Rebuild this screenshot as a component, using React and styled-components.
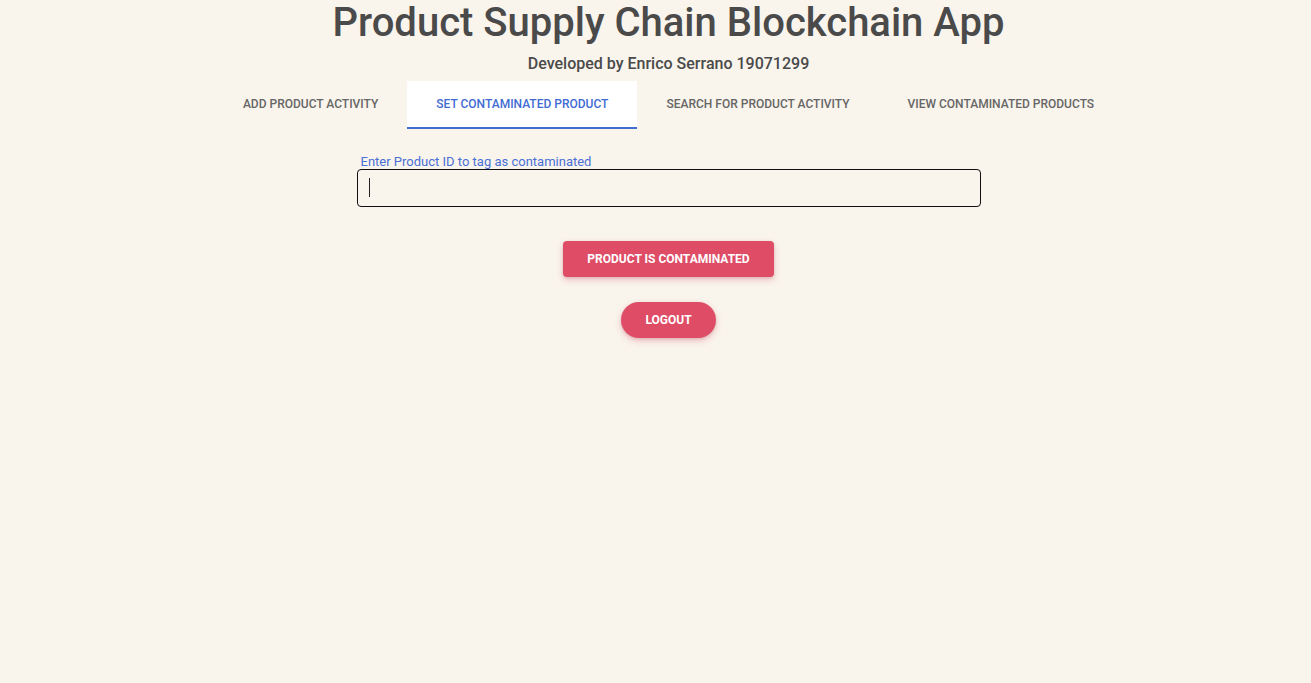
import { useState } from "react";
import styled, { createGlobalStyle } from "styled-components";

const GlobalStyle = createGlobalStyle`
  html, body { margin: 0; padding: 0; background: #f9f4ec; }
  body { font-family: Roboto, "Liberation Sans", sans-serif; min-height: 683px; }
`;

const Page = styled.div`
  display: flex; flex-direction: column; align-items: center;
  padding-left: 26px;
`;
const Title = styled.h1`
  margin: 0; font-size: 40px; font-weight: 500;
  color: #4a4a4a; line-height: 46px;
`;
const Subtitle = styled.h3`
  margin: 7px 0 0; font-size: 16px; font-weight: 500; color: #4a4a4a; line-height: 22px;
`;
const TabBar = styled.div`
  display: flex; margin-top: 6px; height: 48px;
`;
const Tab = styled.button`
  border: none; background: ${({ $active }) => ($active ? "#fff" : "transparent")};
  color: ${({ $active }) => ($active ? "#3f6bd3" : "#666")};
  font-family: Roboto, "Liberation Sans", sans-serif;
  font-size: 12px; font-weight: 500; text-transform: uppercase;
  padding: 0 29px; height: 48px; cursor: pointer;
  border-bottom: 2px solid ${({ $active }) => ($active ? "#3f6bd3" : "transparent")};
  box-sizing: border-box;
`;
const Form = styled.div`
  display: flex; flex-direction: column; align-items: center; margin-top: 26px;
`;
const Field = styled.label`
  display: flex; flex-direction: column; width: 624px;
`;
const FieldLabel = styled.span`
  font-size: 13px; color: #4a70d6; padding-left: 4px; line-height: 14px;
`;
const InputWrap = styled.div`position: relative;`;
const Input = styled.input`
  box-sizing: border-box; width: 624px; height: 38px;
  border: 1px solid #111; border-radius: 4px; background: transparent;
  padding: 0 12px; font-size: 14px; font-family: Roboto, "Liberation Sans", sans-serif;
  outline: none; color: #222;
`;
const Caret = styled.span`
  position: absolute; left: 12px; top: 9px; width: 1px; height: 19px; background: #222;
`;
const DangerBtn = styled.button`
  border: none; background: #de4c66; color: #fff;
  font-family: Roboto, "Liberation Sans", sans-serif;
  font-size: 12px; font-weight: 700; text-transform: uppercase;
  height: 36px; padding: 0 24px;
  border-radius: ${({ $pill }) => ($pill ? "18px" : "4px")};
  margin-top: ${({ $gap }) => $gap}px; cursor: pointer;
  box-shadow: 0 3px 6px rgba(222, 76, 102, 0.3), 0 1px 3px rgba(0,0,0,0.12);
`;

const TABS = [
  "Add Product Activity",
  "Set Contaminated Product",
  "Search for Product Activity",
  "View Contaminated Products",
];

export default function App() {
  const [tab, setTab] = useState(1);
  const [value, setValue] = useState("");
  return (
    <Page>
      <GlobalStyle />
      <Title>Product Supply Chain Blockchain App</Title>
      <Subtitle>Developed by Enrico Serrano 19071299</Subtitle>
      <TabBar>
        {TABS.map((t, i) => (
          <Tab key={t} $active={i === tab} onClick={() => setTab(i)}>{t}</Tab>
        ))}
      </TabBar>
      <Form>
        <Field>
          <FieldLabel>Enter Product ID to tag as contaminated</FieldLabel>
          <InputWrap>
            <Input value={value} onChange={(e) => setValue(e.target.value)} />
            {!value && <Caret />}
          </InputWrap>
        </Field>
        <DangerBtn $gap={34}>Product is contaminated</DangerBtn>
        <DangerBtn $gap={25} $pill>Logout</DangerBtn>
      </Form>
    </Page>
  );
}
